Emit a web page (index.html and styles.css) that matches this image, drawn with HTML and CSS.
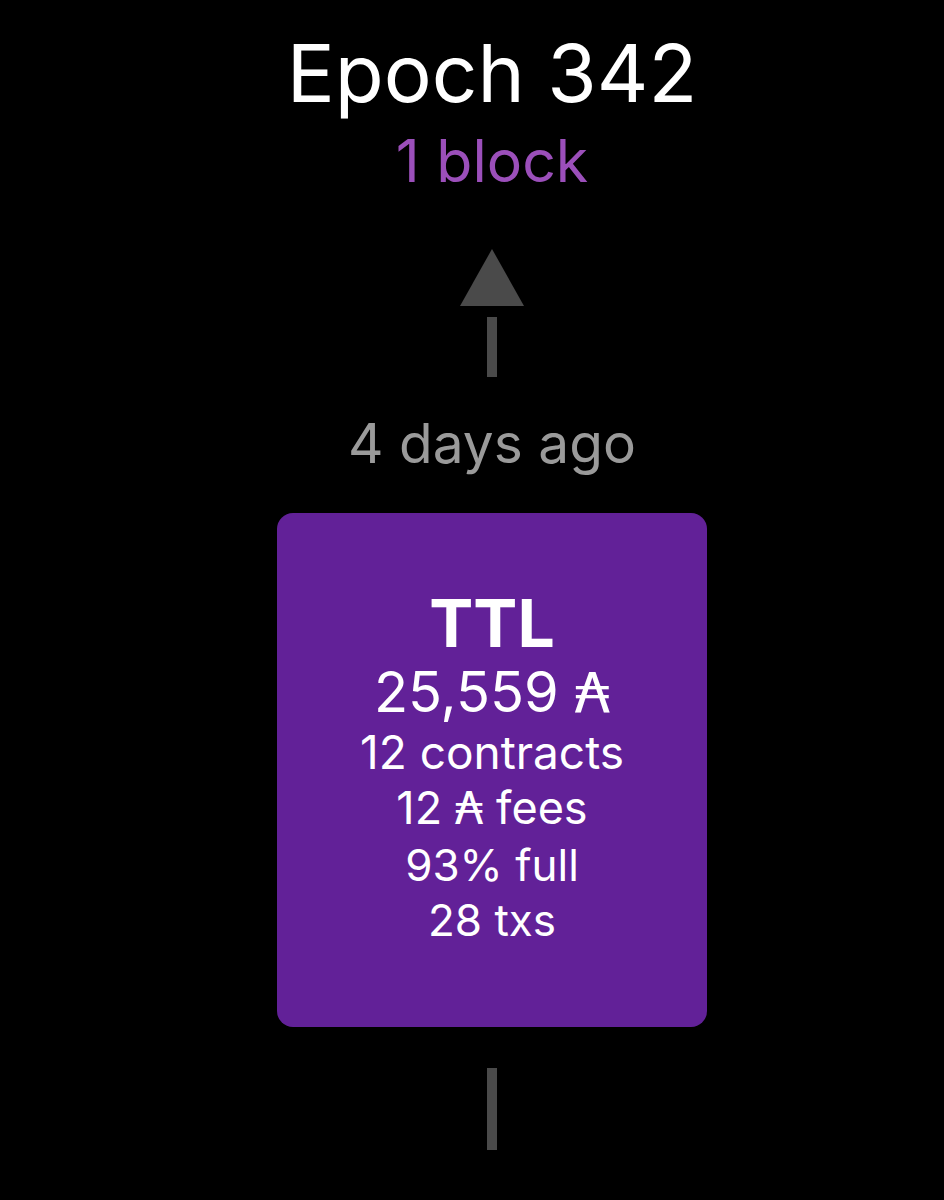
FILE: index.html
```html
<!DOCTYPE html>
<html lang="en">
<head>
<meta charset="utf-8">
<title>Epoch 342</title>
<link rel="stylesheet" href="styles.css">
</head>
<body>
<main class="page">
  <header class="epoch">
    <h1 class="epoch-title">Epoch 342</h1>
    <p class="epoch-count">1 block</p>
  </header>
  <svg class="arrow" width="64" height="128" viewBox="0 0 64 128" aria-hidden="true">
    <polygon points="32,0 64,57 0,57" fill="#4a4a4a"/>
    <rect x="27" y="68" width="10" height="60" fill="#4a4a4a"/>
  </svg>
  <p class="age">4 days ago</p>
  <section class="block-card">
    <h2 class="block-name">TTL</h2>
    <p class="block-line block-amount">25,559 <span class="ada">₳</span></p>
    <p class="block-line block-contracts">12 contracts</p>
    <p class="block-line block-fees">12 <span class="ada">₳</span> fees</p>
    <p class="block-line">93% full</p>
    <p class="block-line block-txs">28 txs</p>
  </section>
  <div class="link-stem"></div>
</main>
</body>
</html>
```
FILE: styles.css
```css
html, body {
  margin: 0;
  padding: 0;
  background: #000;
}

body {
  font-family: Inter, "Noto Sans", "DejaVu Sans", sans-serif;
  color: #fff;
}

.page {
  display: flex;
  flex-direction: column;
  align-items: center;
  padding: 33px 0 0 40px;
  min-height: 1200px;
  box-sizing: border-box;
  overflow: hidden;
}

.epoch {
  display: flex;
  flex-direction: column;
  align-items: center;
}

.epoch-title {
  margin: 0;
  font-size: 80px;
  line-height: 80px;
  font-weight: 400;
  color: #fff;
}

.epoch-count {
  margin: 18px 0 0;
  font-size: 59px;
  line-height: 60px;
  color: #9b4fba;
}

.arrow {
  display: block;
  margin-top: 58px;
}

.age {
  margin: 36px 0 0;
  font-size: 55px;
  line-height: 60px;
  color: #9a9a9a;
}

.block-card {
  margin-top: 40px;
  width: 430px;
  height: 514px;
  box-sizing: border-box;
  background: #622198;
  border-radius: 16px;
  display: flex;
  flex-direction: column;
  align-items: center;
  justify-content: center;
  padding-bottom: 5px;
}

.block-name {
  margin: 0;
  font-size: 66px;
  line-height: 70px;
  font-weight: 700;
}

.block-line {
  margin: 0;
  font-size: 44px;
  line-height: 56px;
}

.block-amount {
  margin-top: 3px;
  font-size: 56px;
  line-height: 62px;
}

.block-contracts {
  font-size: 46px;
}

.block-fees {
  font-size: 45px;
}

.block-txs {
  font-size: 44px;
  line-height: 54px;
}

.ada {
  font-family: "DejaVu Sans", sans-serif;
}

.link-stem {
  margin-top: 41px;
  width: 10px;
  height: 82px;
  background: #4a4a4a;
}
```
